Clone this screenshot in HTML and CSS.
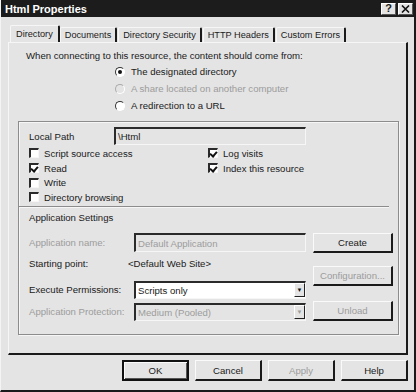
FILE: index.html
```html
<!DOCTYPE html>
<html lang="en">
<head>
    <meta charset="UTF-8">
    <title>Html Properties</title>
    <link rel="stylesheet" href="styles.css">
</head>
<body>
    <div class="window">
        <div class="titlebar">
            <span class="title">Html Properties</span>
            <div class="title-buttons">
                <span class="tbtn">?</span>
                <span class="tbtn">
                    <svg width="9" height="8" viewBox="0 0 9 8"><path d="M1 0.5 L8 7.5 M8 0.5 L1 7.5" stroke="#111" stroke-width="1.6"/></svg>
                </span>
            </div>
        </div>

        <div class="tabs">
            <div class="tab active">Directory</div>
            <div class="tab">Documents</div>
            <div class="tab">Directory Security</div>
            <div class="tab">HTTP Headers</div>
            <div class="tab">Custom Errors</div>
        </div>

        <div class="panel">
            <p class="intro">When connecting to this resource, the content should come from:</p>
            <div class="radios">
                <div class="radio-row"><span class="radio checked"></span>The designated directory</div>
                <div class="radio-row disabled"><span class="radio"></span>A share located on another computer</div>
                <div class="radio-row"><span class="radio"></span>A redirection to a URL</div>
            </div>

            <div class="group">
                <div class="path-row">
                    <span class="label">Local Path</span>
                    <div class="field">\Html</div>
                </div>
                <div class="checks">
                    <div class="check-col">
                        <div class="check-row"><span class="cb"></span>Script source access</div>
                        <div class="check-row"><span class="cb on"></span>Read</div>
                        <div class="check-row"><span class="cb"></span>Write</div>
                        <div class="check-row"><span class="cb"></span>Directory browsing</div>
                    </div>
                    <div class="check-col">
                        <div class="check-row"><span class="cb on"></span>Log visits</div>
                        <div class="check-row"><span class="cb on"></span>Index this resource</div>
                    </div>
                </div>
                <div class="separator"></div>
                <div class="app-title">Application Settings</div>
                <div class="app">
                    <div class="app-fields">
                        <div class="app-row row-name disabled">
                            <span class="app-label">Application name:</span>
                            <div class="field field-wide">Default Application</div>
                        </div>
                        <div class="app-row row-start">
                            <span class="app-label">Starting point:</span>
                            <span class="app-value">&lt;Default Web Site&gt;</span>
                        </div>
                        <div class="app-row row-exec">
                            <span class="app-label">Execute Permissions:</span>
                            <div class="select">
                                <span>Scripts only</span>
                                <span class="arrow">&#9660;</span>
                            </div>
                        </div>
                        <div class="app-row row-prot disabled">
                            <span class="app-label">Application Protection:</span>
                            <div class="select select-off">
                                <span>Medium (Pooled)</span>
                                <span class="arrow">&#9660;</span>
                            </div>
                        </div>
                    </div>
                    <div class="app-buttons">
                        <div class="btn btn-create">Create</div>
                        <div class="btn btn-config disabled">Configuration...</div>
                        <div class="btn btn-unload disabled">Unload</div>
                    </div>
                </div>
            </div>
        </div>

        <div class="footer">
            <div class="btn btn-default">OK</div>
            <div class="btn">Cancel</div>
            <div class="btn disabled">Apply</div>
            <div class="btn">Help</div>
        </div>
    </div>
</body>
</html>
```

FILE: styles.css
```css
body {
    margin: 0;
    background: #e4e4e4;
    font-family: 'Liberation Sans', Arial, sans-serif;
    font-size: 9.6px;
    color: #1a1a1a;
}
.window {
    width: 416px;
    height: 392px;
    box-sizing: border-box;
    border-right: 2px solid #1a1a1a;
    border-bottom: 2px solid #1a1a1a;
    border-left: 1px solid #f4f4f4;
    overflow: hidden;
}
.titlebar {
    height: 17px;
    background: #1c1c1c;
    display: flex;
    align-items: center;
    justify-content: space-between;
    padding: 0 1px 0 4px;
}
.title {
    color: #fff;
    font-weight: bold;
    font-size: 11px;
}
.title-buttons {
    display: flex;
    gap: 2px;
}
.tbtn {
    width: 15px;
    height: 12px;
    box-sizing: border-box;
    background: #e4e4e4;
    border-top: 1px solid #fff;
    border-left: 1px solid #fff;
    border-right: 1px solid #555;
    border-bottom: 1px solid #555;
    display: flex;
    align-items: center;
    justify-content: center;
    font-weight: bold;
    font-size: 11px;
    line-height: 1;
}

/* tabs */
.tabs {
    display: flex;
    align-items: flex-end;
    margin-top: 9px;
    padding-left: 9px;
    height: 16px;
    font-size: 9.2px;
}
.tab {
    height: 14px;
    padding: 0 4px;
    display: flex;
    align-items: center;
    border-top: 1px solid #f6f6f6;
    border-left: 1px solid #f6f6f6;
    border-right: 2px solid #1a1a1a;
    border-radius: 2px 2px 0 0;
    margin-right: 1px;
}
.tab.active {
    height: 16px;
    padding: 0 5px;
    margin-right: 0;
}

.panel {
    margin: 0 6px 0 7px;
    height: 313px;
    box-sizing: border-box;
    border-top: 1px solid #f6f6f6;
    border-left: 1px solid #f6f6f6;
    border-right: 2px solid #1a1a1a;
    border-bottom: 2px solid #1a1a1a;
    padding: 6px 8px 0 9px;
}
.intro {
    margin: 0 0 0 8px;
    height: 14px;
    line-height: 14px;
}
.radios {
    margin: 0 0 0 97px;
}
.radio-row {
    display: flex;
    align-items: center;
    height: 17px;
}
.radio {
    width: 10px;
    height: 10px;
    box-sizing: border-box;
    border-radius: 50%;
    background: #fff;
    border: 1px solid;
    border-color: #333 #fff #fff #333;
    margin-right: 6px;
    position: relative;
}
.radio.checked::after {
    content: '';
    position: absolute;
    left: 2px;
    top: 2px;
    width: 4px;
    height: 4px;
    border-radius: 50%;
    background: #111;
}
.disabled {
    color: #9c9c9c;
}
.radio-row.disabled .radio {
    background: #e4e4e4;
    border-color: #aaa #fff #fff #aaa;
}

/* group box */
.group {
    margin-top: 7px;
    width: 381px;
    height: 214px;
    box-sizing: border-box;
    border: 1px solid #8c8c8c;
    box-shadow: 1px 1px 0 #f6f6f6, inset 1px 1px 0 #f6f6f6;
    padding: 5px 0 0 10px;
}
.path-row {
    display: flex;
    align-items: center;
    height: 18px;
}
.label {
    width: 85px;
}
.field {
    width: 192px;
    height: 18px;
    box-sizing: border-box;
    border-top: 2px solid #2a2a2a;
    border-left: 2px solid #2a2a2a;
    border-right: 1px solid #f6f6f6;
    border-bottom: 1px solid #f6f6f6;
    padding-left: 2px;
    display: flex;
    align-items: center;
    color: #1a1a1a;
}
.checks {
    display: flex;
    margin-top: 1px;
}
.check-col {
    width: 179px;
}
.check-row {
    display: flex;
    align-items: center;
    height: 14.7px;
}
.cb {
    width: 10px;
    height: 10px;
    box-sizing: border-box;
    background: #fff;
    border-top: 2px solid #2a2a2a;
    border-left: 2px solid #2a2a2a;
    border-right: 1px solid #f6f6f6;
    border-bottom: 1px solid #f6f6f6;
    margin-right: 5px;
    position: relative;
}
.cb.on::after {
    content: '';
    position: absolute;
    left: 1px;
    top: 0;
    width: 3px;
    height: 5px;
    border-right: 2px solid #111;
    border-bottom: 2px solid #111;
    transform: rotate(40deg);
}
.separator {
    margin: 1px 9px 0 -10px;
    border-top: 1px solid #8c8c8c;
    border-bottom: 1px solid #f6f6f6;
}
.app-title {
    height: 14px;
    line-height: 14px;
    margin-top: 3px;
}
.app {
    display: flex;
    margin-top: 8px;
}
.app-fields {
    flex: 0 0 279px;
}
.app-row {
    display: flex;
    align-items: center;
}
.app-label {
    width: 105px;
}
.row-name { height: 20px; }
.row-start { height: 18px; margin-top: 2px; }
.row-exec { height: 18px; margin-top: 8px; }
.row-prot { height: 18px; margin-top: 4px; }
.field-wide {
    width: 172px;
    height: 19px;
    color: #9c9c9c;
}
.app-value {
    margin-left: -6px;
}
.select {
    width: 172px;
    height: 18px;
    box-sizing: border-box;
    background: #fff;
    border-top: 2px solid #2a2a2a;
    border-left: 2px solid #2a2a2a;
    border-right: 1px solid #f6f6f6;
    border-bottom: 1px solid #f6f6f6;
    display: flex;
    align-items: center;
    justify-content: space-between;
    padding-left: 2px;
    color: #1a1a1a;
}
.select-off {
    background: #e4e4e4;
    color: #9c9c9c;
}
.arrow {
    width: 11px;
    height: 14px;
    box-sizing: border-box;
    background: #e4e4e4;
    border-top: 1px solid #fff;
    border-left: 1px solid #fff;
    border-right: 1px solid #222;
    border-bottom: 1px solid #222;
    font-size: 6px;
    display: flex;
    align-items: center;
    justify-content: center;
    color: #111;
}
.select-off .arrow {
    color: #9c9c9c;
}
.app-buttons {
    display: flex;
    flex-direction: column;
    flex: 0 0 80px;
    margin-left: 5px;
}
.btn {
    width: 67px;
    height: 21px;
    box-sizing: border-box;
    border-top: 1px solid #fafafa;
    border-left: 1px solid #fafafa;
    border-right: 2px solid #1a1a1a;
    border-bottom: 2px solid #1a1a1a;
    display: flex;
    align-items: center;
    justify-content: center;
}
.app-buttons .btn {
    width: 80px;
    height: 20px;
}
.btn-config { margin-top: 13px; }
.btn-unload { margin-top: 15px; }
.btn-default {
    border: 2px solid #111;
    box-shadow: inset 1px 1px 0 #fafafa, inset -1px -1px 0 #555;
}

.footer {
    display: flex;
    justify-content: flex-end;
    gap: 6px;
    padding-right: 6px;
    margin-top: 5px;
}
```
